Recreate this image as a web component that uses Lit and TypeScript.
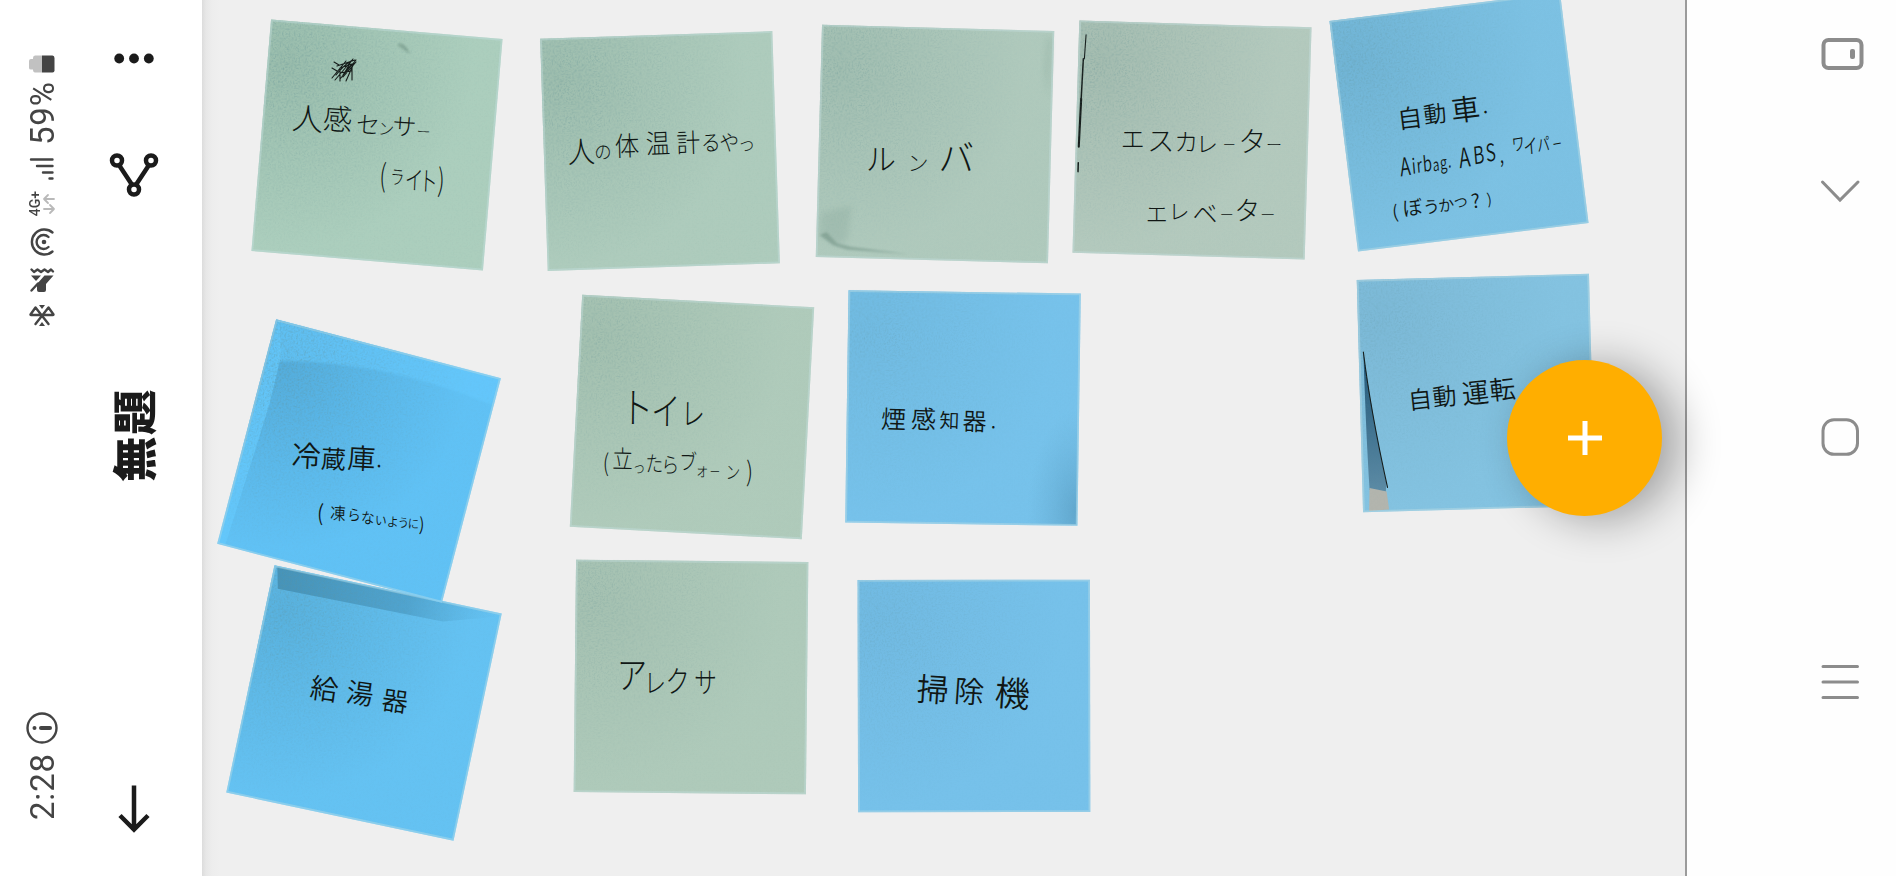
import { LitElement, html, css, svg } from "lit";
import { customElement, property } from "lit/decorators.js";

/** One written glyph (or short word): text, centre x, centre y, size. */
type Glyph = [string, number, number, number];

interface Note {
  cx: number;
  cy: number;
  angle: number;
  paper: string;
  shade: string;
  grain: number;
  tilt?: number;
  weight?: number;
  lines: Glyph[][];
  detail?: string;
}

const NOTES: Note[] = [
  {
    cx: 377.3, cy: 144.7, angle: 4.85, paper: "#aed0bf", shade: "#98bbaa", grain: 0.9, tilt: 4,
    lines: [
      [["人", 307.3, 117, 31], ["感", 337.3, 117.5, 29], ["セ", 367.3, 123.3, 24], ["ン", 386, 128, 16], ["サ", 404, 125, 24], ["ー", 423.5, 131, 14]],
      [["(", 382.7, 174.3, 31], ["ラ", 397.5, 176, 20], ["イ", 413.5, 178.5, 26], ["ト", 429, 180, 27], [")", 441, 179, 31]],
    ],
    detail: "scribble",
  },
  {
    cx: 660, cy: 150.8, angle: -1.87, paper: "#b0cdbe", shade: "#9cbcac", grain: 0.8, tilt: -2,
    lines: [
      [["人", 581.7, 151.7, 30], ["の", 603, 151.7, 19], ["体", 627.3, 145.7, 27], ["温", 658.3, 143.3, 27], ["計", 688.7, 142.7, 26], ["る", 711, 142.5, 22], ["や", 729.5, 142.5, 22], ["つ", 747, 145.5, 16]],
    ],
  },
  {
    cx: 935.3, cy: 144, angle: 1.55, paper: "#b1cbbe", shade: "#a0bdaf", grain: 0.7,
    lines: [[["ル", 881.7, 159, 30], ["ン", 918.3, 162, 21], ["バ", 956.7, 157, 36]]],
    detail: "crease",
  },
  {
    cx: 1192, cy: 140, angle: 1.7, paper: "#b5cbbf", shade: "#a3bbae", grain: 0.7,
    lines: [
      [["エ", 1132.7, 138.7, 24], ["ス", 1160.7, 141, 27], ["カ", 1186, 141.5, 24], ["レ", 1207, 144, 22], ["ー", 1229.3, 144.3, 13], ["タ", 1251.7, 141.5, 28], ["ー", 1274, 145.3, 16]],
      [["エ", 1156.7, 214, 22], ["レ", 1179, 211.5, 21], ["ベ", 1205, 213.5, 25], ["ー", 1226.7, 215, 14], ["タ", 1246.7, 210, 26], ["ー", 1267.7, 214.7, 15]],
    ],
    detail: "edge",
  },
  {
    cx: 1459, cy: 122, angle: -7.06, paper: "#7ec3e5", shade: "#6fb3d4", grain: 0.7, tilt: -7, weight: 350,
    lines: [
      [["自", 1411, 119.3, 25], ["動", 1436, 115, 23], ["車", 1466.7, 110.7, 29], [".", 1485.7, 106, 20]],
      [["A", 1406, 167, 25], ["i", 1414.5, 166, 21], ["r", 1420, 165.5, 20], ["b", 1428, 164, 21], ["a", 1436.5, 165, 17], ["g", 1444, 163, 18], [".", 1450, 161, 18], ["A", 1465.5, 158, 27], ["B", 1479.5, 155.5, 24], ["S", 1491.5, 153, 24], [",", 1502, 155, 22], ["ワ", 1518.7, 144.5, 18], ["イ", 1531, 147, 20], ["パ", 1544, 145, 18], ["ー", 1557.500, 144.5, 13]],
      [["(", 1396, 212, 18], ["ぼ", 1413, 208.5, 20], ["う", 1432, 207.5, 17], ["か", 1447, 206, 16], ["つ", 1461.5, 203, 14], ["?", 1476.5, 201, 19], [")", 1490, 199, 15]],
    ],
  },
  {
    cx: 1475.5, cy: 392.6, angle: -1.55, paper: "#85c4e2", shade: "#7bb8d6", grain: 0.5, tilt: -6, weight: 350,
    lines: [[["自", 1420.5, 400, 24], ["動", 1445, 397, 24], ["運", 1476, 393.5, 27], ["転", 1503, 390, 26]]],
    detail: "fold",
  },
  {
    cx: 363.6, cy: 702.8, angle: 11.98, paper: "#66c4f5", shade: "#57b0dd", grain: 0.8, tilt: 8, weight: 350,
    lines: [[["給", 322.7, 686.5, 28], ["湯", 358.3, 691, 27], ["器", 393.3, 698.6, 26]]],
    detail: "strip",
  },
  {
    cx: 359, cy: 460.7, angle: 14.7, paper: "#62c4f8", shade: "#52abdb", grain: 1, tilt: 3, weight: 350,
    lines: [
      [["冷", 305.7, 454.3, 29], ["蔵", 333, 458, 25], ["庫", 361, 457, 28], [".", 379, 459, 20]],
      [["(", 320, 512, 22], ["凍", 337.7, 512.5, 17], ["ら", 354, 514, 15], ["な", 367.500, 517, 15], ["い", 380.500, 519.5, 13], ["よ", 392.500, 521, 13], ["う", 403, 522, 12.5], ["に", 413, 523, 12.5], [")", 421.5, 523.5, 18]],
    ],
    detail: "shadow",
  },
  {
    cx: 692.1, cy: 416.6, angle: 3.06, paper: "#b1ccbc", shade: "#a2bfae", grain: 0.6, tilt: 1,
    lines: [
      [["ト", 638, 406.5, 42], ["イ", 665, 410, 38], ["レ", 693, 412.5, 31]],
      [["(", 606, 462, 24], ["立", 622.5, 458, 25], ["っ", 639.3, 466.5, 16], ["た", 654.3, 462.7, 22], ["ら", 670.4, 464, 22], ["ブ", 688, 461, 22], ["ォ", 702, 469.5, 17], ["ー", 715, 471, 13], ["ン", 732.9, 471.5, 18], [")", 749.5, 470.5, 27]],
    ],
  },
  {
    cx: 962.7, cy: 408, angle: 0.83, paper: "#77c3ec", shade: "#70bae1", grain: 0.5, tilt: 2, weight: 350,
    lines: [[["煙", 892.9, 418.5, 25], ["感", 923, 418.5, 25], ["知", 949, 420, 20], ["器", 974, 420.5, 24], [".", 993, 421, 19]]],
    detail: "corner",
  },
  {
    cx: 691, cy: 677.3, angle: 0.6, paper: "#b0cbbb", shade: "#a4c0b0", grain: 0.55,
    lines: [[["ア", 631.9, 675, 37], ["レ", 655, 683, 27], ["ク", 677, 680.5, 30], ["サ", 705.4, 682.5, 28]]],
  },
  {
    cx: 974.1, cy: 696, angle: -0.1, paper: "#77c2eb", shade: "#70b9e1", grain: 0.45, tilt: 4, weight: 350,
    lines: [[["掃", 932, 688, 32], ["除", 968.6, 690, 30], ["機", 1011.5, 692, 35]]],
  },
];

const SIDE = 232.3;
const HALF = SIDE / 2;
const BOX = 300;

const DETAILS: Record<string, unknown> = {
  scribble: svg`<path class="pen" d="M-43,-83l5,3M-45,-77l5,3M-45,-67l14,-17M-42,-65l18,-21M-37,-66l16,-19M-34,-68l13,-15M-40,-79l18,-6M-41,-70q8,-10 15,-14q-5,10-8,14q6,-9 11,-12M-37,-64v-13l12,-4v16M-37,-72l11,-2M-31,-64l8,-18"/>
    <path class="smudge" d="M22,-102q6,2 9,11q-8,-5-13,-9z" transform="translate(2,0)"/>`,
  crease: svg`<path class="smudge" d="M-113,94l7,-3 11,11 14,3 58,6-62,-3-14,-4z"/>
    <path class="smudge soft" d="M-112,72l30,-8 -3,34-9,6-19,-10z"/><path class="smudge soft" d="M109,-110l5,2-2,60-5,-28z"/>`,
  edge: svg`<path class="pen" d="M-109,-102l-1,24"/><path class="pen dark" d="M-111,-78l-1,40"/><path class="pen darker" d="M-112,-38l-1,48"/><path class="pen dark" d="M-113,26v9"/>`,
  fold: svg`<path d="M-111.500,-44Q-106,10 -92,88L-93,98L-109,94Q-111,40 -111.500,-44z" fill="url(#slate)"/>
    <path d="M-109,92l17,4 2,18-20,1z" fill="#b3b5ae"/><path d="M-111.500,-44Q-106,14 -91,92" class="pen"/>`,
  strip: svg`<path d="M-113,-115H112V-112L60,-96L-108,-94z" fill="url(#band)"/>`,
  shadow: svg`<path d="M-114,-115L-115,115H-108L-101,-30L-102,-80L-112,-115z" fill="#64c8fb" opacity=".85"/>
    <path d="M-112,-115H115V-88Q0,-104 -104,-76z" fill="#66caff" opacity=".6" filter="url(#soft)"/>`,
  corner: svg`<rect x="60" y="0" width="55" height="115" fill="url(#dusk)"/>`,
};

/** Rough advance of a glyph, as a share of its size. */
const advance = (ch: string): number =>
  ch === "(" || ch === ")" ? 0.34 : /[.,i]/.test(ch) ? 0.28 : /[A-Za-z?]/.test(ch) ? 0.58 : /[\u3040-\u30ff]/.test(ch) ? 0.88 : 1;

/** Horizontal squeeze that gives every glyph of a line its own room. */
const squeeze = (line: Glyph[]): number => {
  let s = 1;
  for (let i = 1; i < line.length; i++) {
    const [a, ax, , as] = line[i - 1];
    const [b, bx, , bs] = line[i];
    s = Math.min(s, (bx - ax) / ((advance(a) * as + advance(b) * bs) / 2));
  }
  return Math.max(0.7, s);
};

@customElement("sticky-note")
class StickyNote extends LitElement {
  @property({ attribute: false }) note!: Note;

  static styles = css`
    :host { display: block; width: 300px; height: 300px; pointer-events: none; }
    .sheet { display: block; width: 300px; height: 300px; overflow: visible; }
    .ink { font-family: "Noto Sans CJK JP", "Noto Sans", sans-serif; font-feature-settings: "palt"; fill: #101715; text-anchor: middle; }
    .pen { fill: none; stroke: #151b19; stroke-width: 1.1; stroke-linecap: round; stroke-linejoin: round; }
    .dark { stroke-width: 1.5; }
    .darker { stroke-width: 2.1; }
    .smudge { fill: #5d7f71; opacity: 0.4; filter: url(#soft); }
    .soft { opacity: 0.14; filter: url(#softer); }
    .rim { fill: none; stroke: #c9e2e4; stroke-opacity: 0.38; stroke-width: 1.8; }
  `;

  render() {
    const n = this.note;
    const tilt = n.tilt ?? 0;
    return html`<svg class="sheet" viewBox="${-BOX / 2} ${-BOX / 2} ${BOX} ${BOX}">
      <defs>
        <radialGradient id="tone" cx="0.08" cy="0.18" r="0.8">
          <stop offset="0" stop-color=${n.shade} stop-opacity="0.9" /><stop offset="0.45" stop-color=${n.shade} stop-opacity="0.5" />
          <stop offset="1" stop-color=${n.shade} stop-opacity="0.1" />
        </radialGradient>
        <linearGradient id="slate" x1="0" y1="0" x2="0" y2="1">
          <stop offset="0" stop-color="#1f5577" /><stop offset="1" stop-color="#5d8ca6" />
        </linearGradient>
        <linearGradient id="band" x1="0" y1="0" x2="1" y2="0">
          <stop offset="0" stop-color="#3f88ab" stop-opacity="0.75" /><stop offset="0.6" stop-color="#4593bb" stop-opacity="0.6" />
          <stop offset="1" stop-color="#4fa5d2" stop-opacity="0" />
        </linearGradient>
        <radialGradient id="dusk" cx="1" cy="0.9" r="0.9">
          <stop offset="0" stop-color="#4f91b5" stop-opacity="0.55" /><stop offset="1" stop-color="#5fa5cb" stop-opacity="0" />
        </radialGradient>
        <filter id="soft"><feGaussianBlur stdDeviation="0.9" /></filter>
        <filter id="softer" x="-0.5" y="-0.5" width="2" height="2"><feGaussianBlur stdDeviation="3" /></filter>
        <filter id="grain" x="0" y="0" width="1" height="1">
          <feTurbulence type="fractalNoise" baseFrequency="0.6" numOctaves="2" seed="4" />
          <feColorMatrix values="0 0 0 0 0.12  0 0 0 0 0.28  0 0 0 0 0.3  1.5 0 0 0 -0.66" />
          <feComposite in2="SourceGraphic" operator="in" />
        </filter>
      </defs>
      <g transform="rotate(${n.angle})">
        <rect x=${-HALF} y=${-HALF} width=${SIDE} height=${SIDE} fill=${n.paper} />
        <rect x=${-HALF} y=${-HALF} width=${SIDE} height=${SIDE} fill="url(#tone)" />
        ${n.detail && n.detail !== "scribble" ? DETAILS[n.detail] : ""}
        <rect x=${-HALF} y=${-HALF} width=${SIDE} height=${SIDE} fill="url(#tone)" filter="url(#grain)" opacity=${n.grain} />
        <rect class="rim" x=${-HALF + 0.9} y=${-HALF + 0.9} width=${SIDE - 1.8} height=${SIDE - 1.8} />
      </g>
      ${n.detail === "scribble" ? DETAILS.scribble : ""}
      ${n.lines.map((line) => {
        const s = squeeze(line);
        return svg`<text class="ink" transform="scale(${s},1)" font-weight=${n.weight ?? 300}>${line.map(
          ([ch, x, y, size]) => svg`<tspan x=${(x - n.cx) / s} y=${y - n.cy + size * 0.38} rotate=${tilt} font-size=${size}>${ch}</tspan>`
        )}</text>`;
      })}
    </svg>`;
  }
}

@customElement("status-strip")
class StatusStrip extends LitElement {
  static styles = css`
    :host { display: flex; flex-direction: column; align-items: center; width: 84px; height: 876px; box-sizing: border-box; padding-top: 55px; color: #444; }
    svg { display: block; flex: none; overflow: visible; }
    .line { fill: none; stroke: #444; stroke-width: 2.4; stroke-linecap: round; stroke-linejoin: round; }
    .faint { stroke: #b9b9b9; stroke-width: 1.8; }
    .solid { fill: #444; }
    .label { writing-mode: vertical-rl; transform: rotate(180deg); font: 400 33px/40px Roboto, sans-serif; letter-spacing: 0.8px; color: #444; flex: none; white-space: nowrap; position: relative; left: 1px; }
    .level { margin-top: 6px; height: 66px; }
    .signal { margin-top: 13px; }
    .net { margin-top: 9px; height: 29px; display: flex; align-items: center; gap: 1px; }
    .gen { writing-mode: vertical-rl; transform: rotate(180deg); font: 500 14px/13px Roboto, sans-serif; }
    .nfc { margin-top: 10px; }
    .mute { margin-top: 12px; }
    .bt { margin-top: 12px; }
    .info { margin-top: auto; }
    .time { margin: 12px 0 56px; height: 64px; }
  `;

  render() {
    return html`
      <svg width="26" height="18" viewBox="0 0 26 18"><path d="M13,.5H6Q4,.5 4,3V4H2Q0,4 0,6v7q0,1.500 2,1.500H4q0,3 2,3h7z" fill="#c1c1c1"/><path class="solid" d="M13,.5H23.500Q25.500,.5 25.500,3V15.500Q25.500,17.500 23.500,17.500H13z"/></svg>
      <span class="label level">59%</span>
      <svg class="signal" width="24" height="22" viewBox="0 0 24 22"><path class="line" d="M1,1.500H22.500M7,8H22.500M13,14.500H22.500M19.500,20.500H22.500"/></svg>
      <div class="net"><span class="gen">4G+</span>
        <svg width="12" height="20" viewBox="0 0 12 20"><path class="line faint" d="M11,5H1M5,1L1,5l4,4M1,15H11M7,11l4,4-4,4"/></svg></div>
      <svg class="nfc" width="24" height="28" viewBox="0 0 24 28"><path class="line" d="M22.500,4.500A12.500,12.500 0 1 0 22.500,23.500M18.500,9A7,7 0 1 0 18.500,19"/><circle class="solid" cx="14" cy="14" r="2.300"/></svg>
      <svg class="mute" width="24" height="24" viewBox="0 0 24 24"><path class="line" d="M1.500,1.500l2.500,2.500 3.500,-2.500 3.500,2.500 3.500,-2.500 3.500,2.500 3,-2.500 2,2"/><path class="solid" d="M1,7.500H11L6,13zM14.500,7.500H23.500L16,16V22Q16,24 14,24H9Q7,24 7,22V16z"/><path class="line" d="M1.500,22.500L8,15.500"/></svg>
      <svg class="bt" width="26" height="23" viewBox="0 0 26 23"><path class="line" d="M6.500,20L19.500,3.500 24.500,10.500Q24.500,11 24,11H2Q1.500,11 1.500,10.500L6.500,3.500 19.500,20"/><path class="solid" d="M10,1h6l-3,4zM10,22h6l-3,-4z"/></svg>
      <svg class="info" width="32" height="32" viewBox="0 0 32 32"><circle class="line" cx="16" cy="16" r="14.500"/><path d="M15,16H24" stroke="#444" stroke-width="4" stroke-linecap="round"/><circle class="solid" cx="8.500" cy="16" r="2"/></svg>
      <span class="label time">2:28</span>
    `;
  }
}

@customElement("board-toolbar")
class BoardToolbar extends LitElement {
  static styles = css`
    :host { display: flex; flex-direction: column; align-items: center; width: 100px; height: 876px; box-sizing: border-box; padding-top: 53px; }
    svg { display: block; flex: none; }
    .line { fill: none; stroke: #1b1b1b; stroke-width: 4.5; }
    .share { margin-top: 89px; }
    .title { margin: 191px 4px 0 0; height: 94px; flex: none; writing-mode: vertical-rl; transform: rotate(180deg); font: 900 45.500px/60px "Noto Sans CJK JP", sans-serif; letter-spacing: 1.5px; color: #1b1b1b; }
    .title span { text-orientation: sideways; }
    .back { margin: auto 0 43px; }
  `;

  render() {
    return html`
      <svg width="40" height="11" viewBox="0 0 40 11" fill="#1b1b1b"><circle cx="5.200" cy="5.500" r="4.900"/><circle cx="20" cy="5.500" r="4.900"/><circle cx="34.800" cy="5.500" r="4.900"/></svg>
      <svg class="share" width="50" height="44" viewBox="0 0 50 44"><path class="line" d="M10,12L22.500,31M40,12L27.500,31"/><circle class="line" cx="8" cy="7.500" r="5"/><circle class="line" cx="42" cy="7.500" r="5"/><circle class="line" cx="25" cy="36.500" r="5"/></svg>
      <h1 class="title"><span>無題</span></h1>
      <svg class="back" width="32" height="48" viewBox="0 0 32 48"><path class="line" d="M16,.500V44M2,30.500L16,44.500 30,30.500"/></svg>
    `;
  }
}

@customElement("nav-strip")
class NavStrip extends LitElement {
  static styles = css`
    :host { display: flex; flex-direction: column; align-items: flex-start; width: 209px; height: 876px; box-sizing: border-box; padding: 38px 0 0 134px; }
    svg { display: block; flex: none; overflow: visible; }
    .line { fill: none; stroke: #8c8c8c; stroke-width: 3; stroke-linecap: round; }
    .wide { stroke-width: 4; }
    .down { margin-top: 110px; }
    .home { margin-top: 216px; }
    .menu { margin-top: 209px; }
  `;

  render() {
    return html`
      <svg width="43" height="32" viewBox="0 0 43 32"><rect class="line wide" x="2.500" y="2" width="38" height="28" rx="5"/><rect x="29" y="11" width="5" height="10" rx="2" fill="#8c8c8c"/></svg>
      <svg class="down" width="40" height="22" viewBox="0 0 40 22"><path class="line" d="M1.500,2L19,20 37,2"/></svg>
      <svg class="home" width="38" height="38" viewBox="0 0 38 38"><rect class="line" x="2" y="1.800" width="34.500" height="34.500" rx="11"/></svg>
      <svg class="menu" width="38" height="36" viewBox="0 0 38 36"><path class="line" d="M2,1.500H36.500M2,17H36.500M2,32.500H36.500"/></svg>
    `;
  }
}

@customElement("app-root")
class AppRoot extends LitElement {
  static styles = css`
    :host { display: block; width: 1896px; height: 876px; overflow: hidden; position: relative; background: #fefefe; }
    .screen { display: flex; height: 876px; }
    .bars { display: flex; width: 202px; flex: none; background: #fff; }
    .board { flex: 1; background: linear-gradient(90deg, #dcdcdc 0, #e7e7e7 4px, #ededed 10px, #efefef 18px); border-right: 2px solid #9b9b9b; }
    .pin { position: absolute; }
    .add { position: absolute; left: 1507px; top: 360px; width: 155px; height: 156px; border: 0; padding: 0; border-radius: 50%; background: #ffae00; box-shadow: 16px 4px 44px rgba(0, 0, 0, 0.33); display: grid; place-items: center; }
  `;

  render() {
    return html`
      <div class="screen">
        <div class="bars"><status-strip></status-strip><board-toolbar></board-toolbar></div>
        <main class="board">
          ${NOTES.map((n) => html`<sticky-note class="pin" style="left:${n.cx - BOX / 2}px;top:${n.cy - BOX / 2}px" .note=${n}></sticky-note>`)}
        </main>
        <nav-strip></nav-strip>
      </div>
      <button class="add" aria-label="+"><svg width="34" height="34" viewBox="0 0 34 34"><path d="M17,0V34M0,17H34" stroke="#fff" stroke-width="5"/></svg></button>
    `;
  }
}
